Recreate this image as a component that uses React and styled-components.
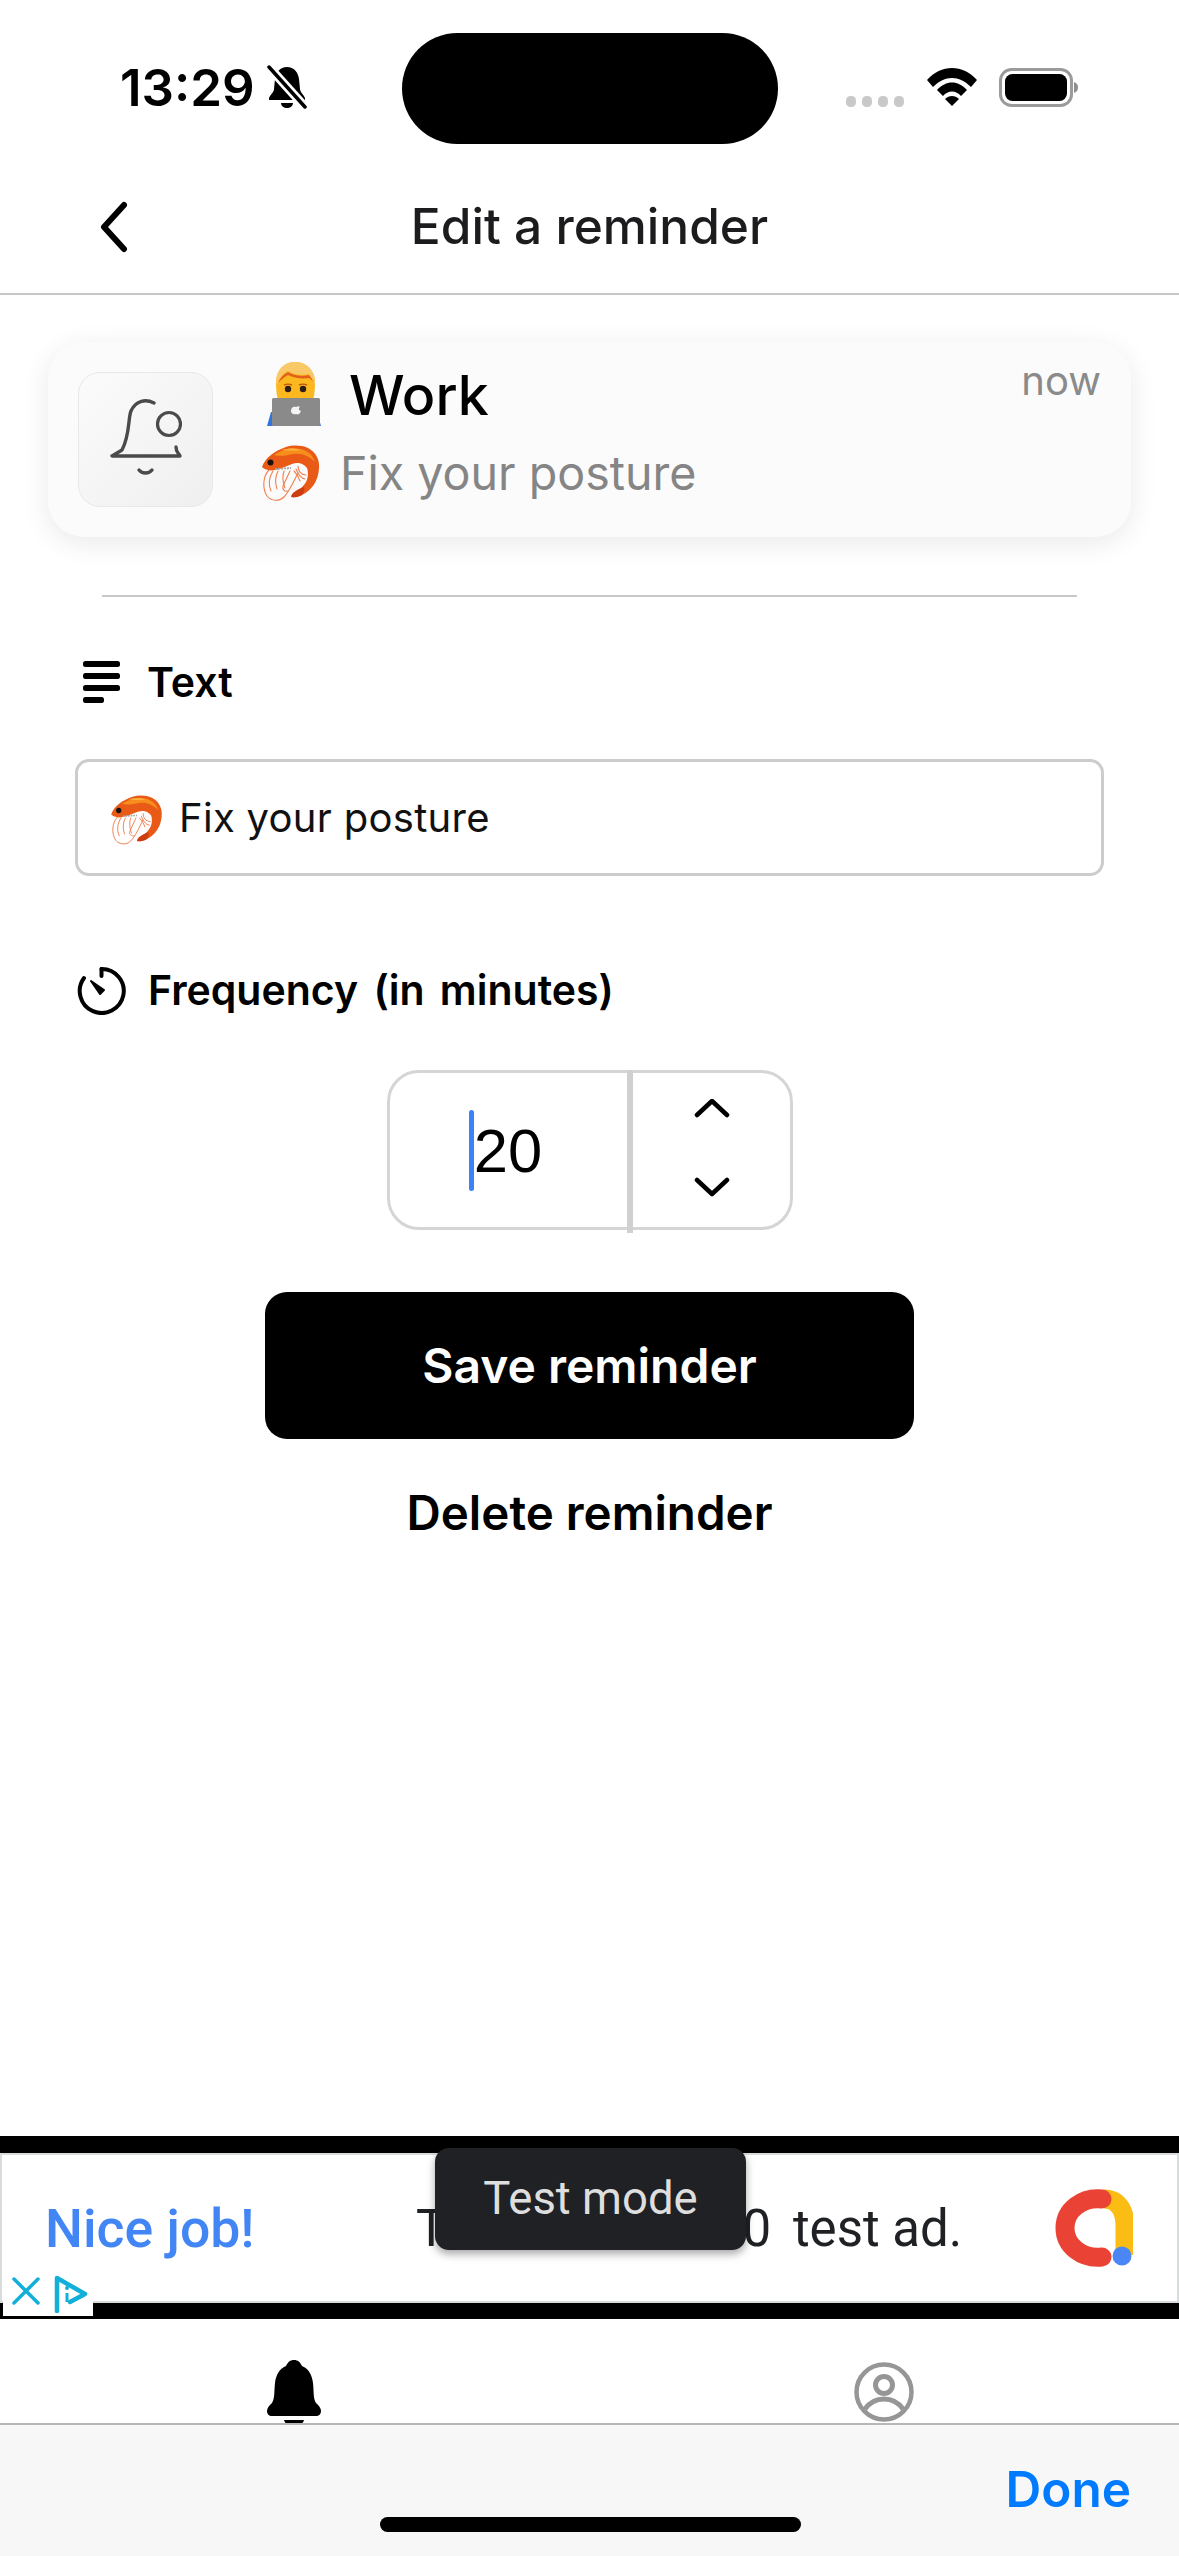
import React from "react";
import styled, { createGlobalStyle } from "styled-components";

const Global = createGlobalStyle`
  html, body { margin: 0; padding: 0; background: #fff; }
  body { font-family: Inter, "Liberation Sans", sans-serif; }
  * { box-sizing: border-box; }
`;

const Phone = styled.div`
  width: 1179px; height: 2556px; display: flex; flex-direction: column; overflow: hidden; background: #fff;
`;
const StatusBar = styled.div`
  height: 165px; flex: none; display: grid; grid-template-columns: 402px 376px 1fr; padding-top: 33px;
`;
const StatusLeft = styled.div`
  height: 108px; display: flex; align-items: center; gap: 12px; padding-left: 120px;
  font-size: 51px; font-weight: 600; color: #000;
`;
const Island = styled.div`
  height: 111px; border-radius: 56px; background: #000;
`;
const StatusRight = styled.div`
  display: flex; align-items: flex-start; padding: 35px 0 0 68px;
`;
const SignalDots = styled.svg`
  width: 58px; height: 11px; margin-top: 28px; margin-right: 23px;
`;
const WifiIcon = styled.svg`
  width: 50px; height: 38px; margin-right: 22px;
`;
const BatteryIcon = styled.svg`
  width: 79px; height: 39px;
`;
const Header = styled.header`
  height: 130px; flex: none; position: relative; display: flex; align-items: center; justify-content: center;
  border-bottom: 2px solid #c8c8c8; padding-bottom: 6px;
`;
const BackIcon = styled.svg`
  position: absolute; left: 97px; top: 36px; width: 36px; height: 52px;
`;
const Title = styled.h1`
  margin: 0; font-size: 49.6px; font-weight: 550; color: #1c1c1e;
`;
const Main = styled.main`
  flex: 1; display: flex; flex-direction: column; padding: 47px 48px 0 48px; min-height: 0;
`;
const NotifCard = styled.section`
  height: 195px; flex: none; border-radius: 36px; background: #fbfbfb; display: flex; padding: 30px 30px 0 30px;
  box-shadow: 0 6px 28px rgba(0,0,0,0.09); position: relative;
`;
const AppIcon = styled.div`
  width: 135px; height: 135px; flex: none; border-radius: 22px; border: 1px solid #e8e8e8;
  background: linear-gradient(135deg, #fbfbfb 0%, #efefef 100%); display: flex; align-items: center; justify-content: center;
`;
const NotifText = styled.div`
  flex: 1; display: flex; flex-direction: column; padding-left: 44px; gap: 6px; margin-top: -14px;
`;
const NotifTitle = styled.div`
  display: flex; align-items: center; gap: 23px; height: 72px; font-size: 55.5px; font-weight: 500; color: #000; padding-left: 5px;
`;
const NotifBody = styled.div`
  display: flex; align-items: center; gap: 15px; font-size: 46.6px; color: #858585; height: 70px; margin-left: -2px;
`;
const BodyCopy = styled.span`
  margin-top: 4px;
`;
const NowLabel = styled.span`
  position: absolute; right: 30px; top: 14px; font-size: 40px; color: #8a8a8a;
`;
const Rule = styled.hr`
  flex: none; margin: 58px 54px 0 54px; border: 0; border-top: 2px solid #c9c9c9; height: 0; width: calc(100% - 108px);
`;
const FieldLabel = styled.div`
  display: flex; align-items: center; height: 50px; font-size: 41px; font-weight: 600; color: #000; word-spacing: 5px;
  margin-top: ${p => p.$top}px; padding-left: ${p => p.$pad}px; gap: ${p => p.$gap}px;
`;
const TextInput = styled.div`
  margin: 52px 27px 0 27px; height: 117px; flex: none; border: 3px solid #cccccc; border-radius: 14px;
  display: flex; align-items: center; gap: 12px; padding-left: 27px; font-size: 40px; color: #111; letter-spacing: 0.3px;
`;
const Stepper = styled.div`
  align-self: center; margin-top: 55px; width: 406px; height: 160px; flex: none; display: flex;
  border: 3px solid #d4d6d6; border-radius: 32px; position: relative;
`;
const StepValue = styled.div`
  width: 237px; display: flex; align-items: center; justify-content: center; font-family: "Liberation Sans", sans-serif;
  font-size: 61.5px; color: #000; padding-right: 5px;
`;
const Caret = styled.span`
  width: 5px; height: 81px; border-radius: 3px; background: #3b82f6;
`;
const StepDivider = styled.div`
  width: 6px; background: #d0d0d0; margin: -3px 0 -6px 0; flex: none;
`;
const StepArrows = styled.div`
  flex: 1; display: flex; flex-direction: column; justify-content: space-between; align-items: center; padding: 25px 0 30px 2px;
`;
const Chevron = styled.svg`
  width: 36px; height: 20px;
`;
const PrimaryButton = styled.button`
  align-self: center; margin-top: 62px; width: 649px; height: 147px; flex: none; border: 0; border-radius: 22px;
  background: #000; color: #fff; font: 600 48px Inter, sans-serif;
`;
const DeleteLink = styled.div`
  margin-top: 44px; text-align: center; font-size: 47.5px; font-weight: 600; color: #000; line-height: 60px;
`;
const AdBand = styled.section`
  height: 183px; flex: none; background: #000; padding: 17px 0 16px 0; position: relative;
`;
const AdInner = styled.div`
  height: 150px; background: #fff; border: 2px solid #d8dcdc; display: grid; grid-template-columns: 371px 639px 1fr; align-items: center;
  padding-left: 43px; font-family: Roboto, sans-serif;
`;
const AdHeadline = styled.span`
  font-size: 53.5px; font-weight: 500; color: #4285f4;
`;
const AdBody = styled.span`
  font-size: 51px; color: #202124; white-space: nowrap;
`;
const AdLead = styled.span`
  letter-spacing: -1px; margin-right: 10px;
`;
const AdChoices = styled.div`
  position: absolute; left: 3px; top: 139px; width: 90px; height: 41px; background: #fff; display: flex; align-items: flex-start; padding: 0 0 0 9px; gap: 12px;
`;
const Toast = styled.div`
  position: absolute; left: 435px; top: 12px; width: 311px; height: 102px; border-radius: 14px; background: #202124;
  display: flex; align-items: center; justify-content: center; color: #dedede; font: 400 45.5px Roboto, sans-serif; padding-bottom: 2px;
  box-shadow: 0 4px 8px rgba(0,0,0,0.35);
`;
const TabBar = styled.nav`
  height: 104px; flex: none; display: grid; grid-template-columns: 1fr 1fr; overflow: hidden; background: #fff;
`;
const TabIcon = styled.div`
  display: flex; padding-top: ${p => p.$top}px; padding-left: ${p => p.$left}px;
`;
const Accessory = styled.footer`
  height: 133px; flex: none; background: #f7f7f7; border-top: 2px solid #b7b7b7; position: relative; display: flex; justify-content: flex-end; padding: 34px 48px 0 0;
`;
const DoneLabel = styled.span`
  font-size: 49.5px; font-weight: 600; color: #007aff; line-height: 60px;
`;
const HomeIndicator = styled.div`
  position: absolute; left: 380px; bottom: 24px; width: 421px; height: 15px; border-radius: 8px; background: #000;
`;

const Shrimp = ({ size }) => (
  <svg width={size} height={size} viewBox="0 0 70 70">
    <g fill="none" stroke="#f08050" strokeWidth="1.100" strokeLinecap="round">
      <path d="M14 34C8 40 7 52 12 60c4 5 12 6 17 1 5-5 9-14 14-24"/>
      <path d="M18 35c-4 6-5 14-2 20"/>
      <path d="M23 35c-3 6-3 12-1 18"/>
      <path d="M29 35c-2 6-1 12 1 17"/>
      <path d="M35 35l-7 15c-1 4 2 6 5 5"/>
      <path d="M43 30c0 5 3 9 8 9M41 33c2 5 4 9 9 10M39 35c3 3 5 7 6 10"/>
    </g>
    <path d="M7 31C10 22 19 15 31 11c7-2 15-2 22 1 8 4 12 12 11 21-1 12-7 21-17 26-4 2-8 3-11 1 3-4 9-6 12-10 5-5 6-12 4-18-4-5-9-6-15-4-6 2-11 5-17 6-4 1-9 0-12-2z" fill="#ea5a17"/>
    <path d="M19 19c8-5 17-8 26-6 7 1 13 6 15 13-6-6-13-9-21-8-7 1-13 3-20 1z" fill="#f78d1d"/>
    <path d="M27 14c6-2 13-2 19 0-5 1-11 1-19 0z" fill="#fbb03b"/>
    <path d="M36 61c1-5 7-8 13-10 1 3 0 5-2 8-4 2-8 3-11 2z" fill="#cc3d12"/>
    <circle cx="15.500" cy="26.500" r="3" fill="#16130f"/>
    <path d="M20 33l16-1" stroke="#a9a49e" strokeWidth="1.800" strokeDasharray="2 1"/>
  </svg>
);

const Technologist = () => (
  <svg width="64" height="66" viewBox="0 0 64 66">
    <path d="M5 65l4-14h46l4 14z" fill="#2f74e0"/>
    <path d="M14 22C14 8 23 1 33 1s20 7 20 21c0 8-1 15-3 20H17c-2-5-3-12-3-20z" fill="#fdb81f"/>
    <path d="M14 22C14 8 23 1 33 1s20 7 20 21l-1 1c-1-4-3-7-5-10-8 2-16 0-21-3-4 2-9 6-10 13z" fill="#f9c868"/>
    <path d="M16 22c2-4 4-8 10-11 5 3 13 5 21 3 2 3 4 5 5 8-1-2-3-4-5-5-8 1-15 0-21-3-4 2-7 5-10 8z" fill="#e2601f"/>
    <circle cx="26" cy="28" r="3.200" fill="#2e1d14"/><circle cx="41" cy="28" r="3.200" fill="#2e1d14"/>
    <path d="M22 24c2-1 6-1 8 0M37 24c2-1 6-1 8 0" stroke="#bf5a12" strokeWidth="1.400" fill="none"/>
    <rect x="10" y="37" width="48" height="28" rx="1.500" fill="#8a8a8a"/>
    <path d="M34 46c2-1 3-1 4 0-2 1-1 4 1 4-1 3-3 4-5 3-3 1-5-1-5-3 0-3 2-5 5-4z" fill="#f4f4f4"/>
  </svg>
);

const AdLogo = () => (
  <svg width="78" height="78" viewBox="0 0 78 78">
    <path d="M49 10c17 0 21 16 21 27v29" fill="none" stroke="#fbbc13" strokeWidth="19"/>
    <path d="M47 10C27 8 10 21 10 39s17 31 37 29" fill="none" stroke="#ea4335" strokeWidth="19" strokeLinecap="round"/>
    <circle cx="67" cy="67" r="9.500" fill="#4a86f5"/>
  </svg>
);

export default function App() {
  return (
    <Phone>
      <Global />
      <StatusBar>
        <StatusLeft>
          13:29
          <svg width="40" height="44" viewBox="0 0 40 44">
            <path d="M20 2c7 0 11 5 12 12l1 10c0 3 4 6 5 9v2H2v-2c1-3 5-6 5-9l1-10C9 7 13 2 20 2z" fill="#000"/>
            <path d="M14 38h12c0 3-3 5-6 5s-6-2-6-5z" fill="#000"/>
            <path d="M2 2l36 40" stroke="#fff" strokeWidth="9"/>
            <path d="M2 2l36 40" stroke="#000" strokeWidth="3.500" strokeLinecap="round"/>
          </svg>
        </StatusLeft>
        <Island />
        <StatusRight>
          <SignalDots viewBox="0 0 58 11">
            {[0, 16, 32, 48].map(x => <rect key={x} x={x} y="0" width="10" height="11" rx="4.500" fill="#c9c9c9" />)}
          </SignalDots>
          <WifiIcon viewBox="0 0 50 38">
            <path d="M0 12C14-4 36-4 50 12l-6 7C32 7 18 7 6 19z" fill="#000"/>
            <path d="M10 22c9-10 21-10 30 0l-6 6c-5-6-13-6-18 0z" fill="#000"/>
            <path d="M18 31c4-4 10-4 14 0l-7 7z" fill="#000"/>
          </WifiIcon>
          <BatteryIcon viewBox="0 0 79 39">
            <rect x="1.500" y="1.500" width="71" height="36" rx="11" fill="none" stroke="#9b9b9b" strokeWidth="3"/>
            <rect x="6" y="6" width="62" height="27" rx="7.500" fill="#000"/>
            <path d="M75 14c3 1 4 3 4 5.500s-1 4.500-4 5.500z" fill="#8e8e8e"/>
          </BatteryIcon>
        </StatusRight>
      </StatusBar>

      <Header>
        <BackIcon viewBox="0 0 36 52">
          <path d="M27 4L7 26l20 22" fill="none" stroke="#000" strokeWidth="6" strokeLinecap="round" strokeLinejoin="round"/>
        </BackIcon>
        <Title>Edit a reminder</Title>
      </Header>

      <Main>
        <NotifCard>
          <AppIcon>
            <svg width="72" height="82" viewBox="0 0 72 82">
              <path d="M44 4C36 0 26 1 21 12c-3 7-1 24-9 39L2 57h68c-1-3-4-3-4-9" fill="none" stroke="#4a4a4a" strokeWidth="3.400" strokeLinecap="round" strokeLinejoin="round"/>
              <circle cx="59" cy="25" r="11.500" fill="none" stroke="#4a4a4a" strokeWidth="3.200"/>
              <path d="M29 71c3 4 10 4 13 0" fill="none" stroke="#4a4a4a" strokeWidth="3.400" strokeLinecap="round"/>
            </svg>
          </AppIcon>
          <NotifText>
            <NotifTitle><Technologist /> Work</NotifTitle>
            <NotifBody><Shrimp size={70} /> <BodyCopy>Fix your posture</BodyCopy></NotifBody>
          </NotifText>
          <NowLabel>now</NowLabel>
        </NotifCard>

        <Rule />

        <FieldLabel $top={60} $pad={35} $gap={27}>
          <svg width="37" height="42" viewBox="0 0 37 42">
            <rect x="0" y="0" width="37" height="6" rx="2.500" fill="#000"/>
            <rect x="0" y="12" width="37" height="6" rx="2.500" fill="#000"/>
            <rect x="0" y="24" width="37" height="6" rx="2.500" fill="#000"/>
            <rect x="0" y="36" width="21" height="6" rx="2.500" fill="#000"/>
          </svg>
          Text
        </FieldLabel>

        <TextInput><Shrimp size={62} /> Fix your posture</TextInput>

        <FieldLabel $top={89} $pad={29} $gap={22}>
          <svg width="49" height="49" viewBox="0 0 49 49">
            <path d="M24.500 3A22 22 0 1 1 7 12" fill="none" stroke="#000" strokeWidth="4" strokeLinecap="round"/>
            <path d="M14 15l13 9-4 4z" fill="#000" stroke="#000" strokeWidth="2" strokeLinejoin="round"/>
            <path d="M24.500 3v7" stroke="#000" strokeWidth="4" strokeLinecap="round"/>
          </svg>
          Frequency (in minutes)
        </FieldLabel>

        <Stepper>
          <StepValue><Caret />20</StepValue>
          <StepDivider />
          <StepArrows>
            <Chevron viewBox="0 0 36 20"><path d="M3 17L18 3l15 14" fill="none" stroke="#000" strokeWidth="4.500" strokeLinecap="round" strokeLinejoin="round"/></Chevron>
            <Chevron viewBox="0 0 36 20"><path d="M3 3l15 14L33 3" fill="none" stroke="#000" strokeWidth="4.500" strokeLinecap="round" strokeLinejoin="round"/></Chevron>
          </StepArrows>
        </Stepper>

        <PrimaryButton>Save reminder</PrimaryButton>
        <DeleteLink>Delete reminder</DeleteLink>
      </Main>

      <AdBand>
        <AdInner>
          <AdHeadline>Nice job!</AdHeadline>
          <AdBody><AdLead>This is a 320x50</AdLead> test ad.</AdBody>
          <AdLogo />
        </AdInner>
        <AdChoices>
          <svg width="28" height="30" viewBox="0 0 28 30"><path d="M2 4l24 24M26 4L2 28" stroke="#12b0d8" strokeWidth="3.500" fill="none" strokeLinecap="round"/></svg>
          <svg width="36" height="38" viewBox="0 0 36 38">
            <path d="M5 36V3l28 16-15 8" fill="none" stroke="#12b0d8" strokeWidth="4.500" strokeLinejoin="round" strokeLinecap="round"/>
            <circle cx="15" cy="13" r="2" fill="#12b0d8"/><path d="M15 18v9" stroke="#12b0d8" strokeWidth="3"/>
          </svg>
        </AdChoices>
        <Toast>Test mode</Toast>
      </AdBand>

      <TabBar>
        <TabIcon $top={41} $left={267}>
          <svg width="54" height="66" viewBox="0 0 54 66">
            <path d="M27 0c4 0 6 2 8 6 7 3 10 9 11 17 1 9 0 15 3 20 3 3 5 5 5 8 0 3-2 5-5 5H5c-3 0-5-2-5-5 0-3 2-5 5-8 3-5 2-11 3-20C9 15 12 9 19 6c2-4 4-6 8-6z" fill="#000"/>
            <path d="M17 60h20c-1 4-5 6-10 6s-9-2-10-6z" fill="#000"/>
          </svg>
        </TabIcon>
        <TabIcon $top={43} $left={264}>
          <svg width="60" height="60" viewBox="0 0 60 60">
            <circle cx="30" cy="30" r="27.500" fill="none" stroke="#969696" strokeWidth="4.500"/>
            <circle cx="30" cy="23" r="8.500" fill="none" stroke="#969696" strokeWidth="5"/>
            <path d="M11 47c5-7 12-10 19-10s14 3 19 10" fill="none" stroke="#969696" strokeWidth="5"/>
          </svg>
        </TabIcon>
      </TabBar>

      <Accessory>
        <DoneLabel>Done</DoneLabel>
        <HomeIndicator />
      </Accessory>
    </Phone>
  );
}
